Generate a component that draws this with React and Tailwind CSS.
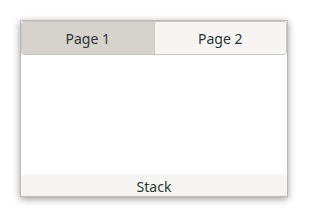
import React from "react";

const App = () => {
  return (
    <div
      className="w-[309px] h-[218px] bg-white pt-[20px] pl-[20px]"
      style={{ fontFamily: '"Noto Sans", "Open Sans", sans-serif' }}
    >
      <div className="w-[268px] h-[177px] flex flex-col bg-white border border-[#bdb9b5] shadow-[0_2px_7px_rgba(0,0,0,0.4)]">
        <div className="flex h-[34px] border border-[#cdc7c2] rounded-[3px] overflow-hidden text-[14px] text-[#2e3436]">
          <div className="flex-1 flex items-center justify-center bg-[#d6d2ce] border-r border-[#cdc7c2]">
            Page 1
          </div>
          <div className="flex-1 flex items-center justify-center bg-[#f6f5f4]">
            Page 2
          </div>
        </div>
        <div className="flex-1 bg-white"></div>
        <div className="h-[22px] pt-[2px] flex items-center justify-center bg-[#f6f5f4] text-[14px] text-[#2e3436]">
          Stack
        </div>
      </div>
    </div>
  );
};

export default App;
